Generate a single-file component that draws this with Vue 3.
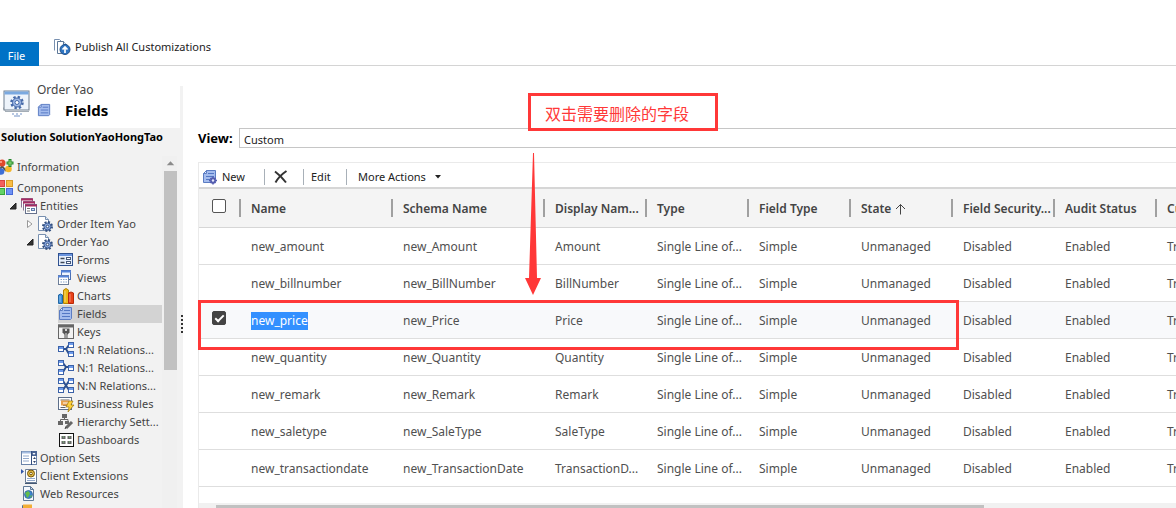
<script setup>
import { ref } from 'vue'

const page = '<path d="M2.500.5h7l3 3v11h-10z" fill="#f4f8fd" stroke="#5f7896"/><path d="M9.500.5v3h3z" fill="#c9d9ec" stroke="#5f7896"/>'
const box = (x, y) =>
  `<rect x="${x}" y="${y}" width="5" height="5" fill="#fff" stroke="#3a61a8"/><path d="M${x + .5} ${y + 1.5}h4" stroke="#6f9cec" stroke-width="2"/>`
const gear = (x, y) =>
  `<circle cx="${x}" cy="${y}" r="4.500" fill="none" stroke="#33507f" stroke-width="2" stroke-dasharray="2 1.530"/><circle cx="${x}" cy="${y}" r="3.500" fill="#8aa8dc" stroke="#3b5a94"/><circle cx="${x}" cy="${y}" r="1.300" fill="#fff" stroke="#33507f"/>`
const fieldSheet =
  '<path d="M4.500 1.500h9v11l-1 1h-11v-9z" fill="#a4bced" stroke="#5b7cc2"/><path d="M1.500 4.500l3-3v3z" fill="#e8f0ff" stroke="#5b7cc2"/><path d="M6 4.500h6M4 7.500h8M4 10.500h8" stroke="#5478c4"/>'

const icons = {
  info: '<path d="M4 7l4 5M4 7l-3 5M8 10l4-3" stroke="#555" stroke-width="2"/><circle cx="4" cy="4" r="3.500" fill="#e0482c"/><circle cx="3" cy="3" r="1" fill="#ffb39e"/><circle cx="3" cy="12.500" r="3.300" fill="#3d6fd6"/><circle cx="10.500" cy="10" r="3.300" fill="#f4b62a"/><path d="M12 0v8M8.500 4h7" stroke="#23852b" stroke-width="3"/><path d="M12 1v6M9.500 4h5" stroke="#8ede78"/>',
  components: '<rect x=".5" y=".5" width="6" height="6" fill="#f4605c" stroke="#d84341"/><rect x="8.500" y=".5" width="6" height="6" fill="#f9bc45" stroke="#d99b25"/><rect x=".5" y="8.500" width="6" height="6" fill="#63d267" stroke="#35a53a"/><rect x="8.500" y="8.500" width="6" height="6" fill="#6e92f5" stroke="#4769d8"/>',
  entities: '<path d="M.5 9.500v-9h11v4M2.500 12.500v-9h11v3" fill="#fff" stroke="#8b7393"/><path d="M0 1.500h12M2 4.500h12" stroke="#a72a62" stroke-width="2"/><rect x="4.500" y="6.500" width="11" height="9" fill="#fff" stroke="#66718c"/><path d="M4 7.500h12" stroke="#a72a62" stroke-width="2"/><path d="M6 10.500h3M6 13h3" stroke="#777"/><rect x="10.500" y="10.500" width="3" height="2" fill="#d7e3f4" stroke="#5d7ba9"/>',
  entity: '<path d="M.5.500h7l3 3v11H.5z" fill="#fff" stroke="#7890b0"/><path d="M7.500.5v3h3" fill="#dce7f4" stroke="#7890b0"/>' + gear(9.5, 10.5),
  forms: '<rect x=".5" y="1.500" width="14" height="12" fill="#e6effc" stroke="#2f5190"/><path d="M1 3h13" stroke="#6a94de" stroke-width="2"/><path d="M2.500 6.500h4M2.500 10.500h4" stroke="#3d4654" stroke-width="1.500"/><rect x="8.500" y="5.500" width="4" height="2" fill="#fff" stroke="#46597a"/><rect x="8.500" y="9.500" width="4" height="2" fill="#fff" stroke="#46597a"/>',
  views: '<rect x="3.500" y=".5" width="9" height="9" fill="#eef5ff" stroke="#4a70b5"/><path d="M3 1.500h10" stroke="#5585dc" stroke-width="2"/><rect x=".5" y="5.500" width="10" height="9" fill="#fff" stroke="#6c7d98"/><path d="M0 6.500h11" stroke="#5585dc" stroke-width="2"/><path d="M2.500 9.500h7M2.500 12h7" stroke="#87a4cb" stroke-dasharray="1.500 1"/>',
  charts: '<path d="M.5 7l2-1 2 1v8.500h-4z" fill="#3f91da" stroke="#2368a5"/><path d="M5.500 2l2.500-1.500L10.500 2v13.500h-5z" fill="#efb915" stroke="#b38305"/><path d="M10.500 5l2.500-1 2.500 1v10.500h-5z" fill="#e84118" stroke="#b82908"/><path d="M2 8v6M7 3v11M12 6v8" stroke="#fff" stroke-opacity=".4"/>',
  fields: fieldSheet,
  keys: '<path d="M0 2h16" stroke="#666" stroke-width="3"/><rect x=".5" y="1" width="15" height="13.500" fill="none" stroke="#666"/><path d="M8 6v8" stroke="#555" stroke-width="3"/><path d="M4.500 4.500h7v4l-2 2h-3l-2-2z" fill="#555"/><circle cx="8" cy="6" r="1" fill="#fff"/><path d="M8 9v5" stroke="#ddd"/>',
  oneN: '<path d="M5 7h3l3-4M8 7l3 5" stroke="#2c508f" stroke-width="2" fill="none"/>' + box(.5, 4.5) + box(10.5, .5) + box(10.5, 9.5),
  nOne: '<path d="M5 3l3 4h3M5 12l3-5" stroke="#2c508f" stroke-width="2" fill="none"/>' + box(.5, .5) + box(.5, 9.5) + box(10.5, 5.5),
  nN: '<path d="M5 3l6 9M11 3l-6 9" stroke="#2c508f" stroke-width="2" fill="none"/>' + box(.5, .5) + box(.5, 9.5) + box(10.5, .5) + box(10.5, 9.5),
  rules: '<rect x=".5" y="1.500" width="13" height="12" fill="#fff" stroke="#5d6f8a"/><path d="M2.500 4h9M5 9.500h6M2.500 11.500h5" stroke="#666"/><path d="M11 5.500H4v3h6" fill="none" stroke="#e8a04b" stroke-width="2"/><path d="M11 5h4l-2 4h3l-6 7 1-5H8z" fill="#ffd33c" stroke="#9b720c" stroke-width=".7"/>',
  hierarchy: '<path d="M4 0h5v4H4zM0 7h5v4H0zM7 7h4v3H7z" fill="#666"/><path d="M6.500 4v2M2.500 7V5.500H10V8" fill="none" stroke="#666"/><path d="M8 14l6-6" stroke="#666" stroke-width="3"/><path d="M7 15l1-2" stroke="#333"/>',
  dashboards: '<rect x="1.500" y="1.500" width="14" height="13" fill="#fff" stroke="#111"/><path d="M3.500 5.500h4M9.500 5.500h4M3.500 10.500h4M9.500 10.500h4" stroke="#666" stroke-width="3"/><path d="M5 4l1 2M11 4l1 2M5 9l1 2M11 9l1 2" stroke="#79a979"/>',
  optionSets: '<rect x=".5" y="1.500" width="15" height="13" fill="#fff" stroke="#6a83a8"/><path d="M1 2.500h9" stroke="#a5bde0" stroke-width="2"/><path d="M2 6h6M2 8.500h6M2 11h6" stroke="#93a9cb"/><path d="M10.500 1v14" stroke="#344e7f"/><path d="M11 1h5v5h-5z" fill="#4a6494"/><path d="M11.500 3h3l-1.500 2z" fill="#fff"/><path d="M12 9h3l-1.500-2zM12 11h3l-1.500 2z" fill="#2f436b"/>',
  client: '<path d="M0 1l3 2.500L0 6z" fill="#3156a8"/><path d="M4.500 1.500h11v13h-11z" fill="#fff" stroke="#6b7d96"/><path d="M4 15.500h12" stroke="#425773"/><circle cx="10" cy="5.500" r="3.500" fill="#e2bb45" stroke="#77570c"/><circle cx="10" cy="5.500" r="1.300" fill="#fff" stroke="#77570c"/><path d="M6 10.500h8M6 12.500h8" stroke="#93a9cb"/>',
  web: page + '<circle cx="7.500" cy="8.500" r="4" fill="#3b83cf" stroke="#2b5f91" stroke-width=".7"/><path d="M4 7l3-2 2 2-1 3-2 2-1-3zM9 10l2-1-1 3z" fill="#64bd4a"/>',
  process: '<path d="M1.500 14V1.500h9V14" fill="#fff" stroke="#526b92"/><path d="M2 2.500h9" stroke="#f2ae36" stroke-width="4"/>',
  newField: fieldSheet + '<circle cx="11" cy="11.500" r="3.200" fill="#6975c7"/><path d="M11 7.500v8M7 11.500h8M8.500 9l5 5M13.500 9l-5 5" stroke="#525bac" stroke-width="1.500"/><circle cx="11" cy="11.500" r="1.200" fill="#e8eaff"/>',
  publish: '<path d="M.5 11.500V.5h5l2 2" fill="#fff" stroke="#7890b0"/><path d="M3.500 2.500h6l3 3v9h-9z" fill="#fff" stroke="#5d7898"/><path d="M9.500 2.500v3h3" fill="#dce7f4" stroke="#5d7898"/><circle cx="11" cy="10.500" r="5" fill="#2f75c2" stroke="#1f4f8c"/><path d="M11 14V9M8.500 10.500L11 8l2.500 2.500" fill="none" stroke="#fff" stroke-width="1.700"/>'
}

const tree = [
  { level: 0, icon: 'info', label: 'Information', spaced: true },
  { level: 0, icon: 'components', label: 'Components' },
  { level: 1, icon: 'entities', label: 'Entities', arrow: 'open' },
  { level: 2, icon: 'entity', label: 'Order Item Yao', arrow: 'closed' },
  { level: 2, icon: 'entity', label: 'Order Yao', arrow: 'open' },
  { level: 3, icon: 'forms', label: 'Forms' },
  { level: 3, icon: 'views', label: 'Views' },
  { level: 3, icon: 'charts', label: 'Charts' },
  { level: 3, icon: 'fields', label: 'Fields', selected: true },
  { level: 3, icon: 'keys', label: 'Keys' },
  { level: 3, icon: 'oneN', label: '1:N Relations...' },
  { level: 3, icon: 'nOne', label: 'N:1 Relations...' },
  { level: 3, icon: 'nN', label: 'N:N Relations...' },
  { level: 3, icon: 'rules', label: 'Business Rules' },
  { level: 3, icon: 'hierarchy', label: 'Hierarchy Sett...' },
  { level: 3, icon: 'dashboards', label: 'Dashboards' },
  { level: 1, icon: 'optionSets', label: 'Option Sets' },
  { level: 1, icon: 'client', label: 'Client Extensions' },
  { level: 1, icon: 'web', label: 'Web Resources' },
  { level: 1, icon: 'process', label: 'Processes' }
]

const columns = ['Name', 'Schema Name', 'Display Nam...', 'Type', 'Field Type', 'State', 'Field Security...', 'Audit Status', 'Customizable']
const rows = ref([
  { name: 'new_amount', schema: 'new_Amount', display: 'Amount', checked: false },
  { name: 'new_billnumber', schema: 'new_BillNumber', display: 'BillNumber', checked: false },
  { name: 'new_price', schema: 'new_Price', display: 'Price', checked: true },
  { name: 'new_quantity', schema: 'new_Quantity', display: 'Quantity', checked: false },
  { name: 'new_remark', schema: 'new_Remark', display: 'Remark', checked: false },
  { name: 'new_saletype', schema: 'new_SaleType', display: 'SaleType', checked: false },
  { name: 'new_transactiondate', schema: 'new_TransactionDate', display: 'TransactionD...', checked: false }
])
</script>

<template>
  <div class="app">
    <header class="ribbon">
      <button class="file">File</button>
      <button class="publish">
        <svg class="icon" viewBox="0 0 16 16" v-html="icons.publish"></svg>
        Publish All Customizations
      </button>
    </header>

    <div class="body">
      <aside class="side">
        <div class="entity-head">
          <svg class="big" viewBox="0 0 28 28">
            <path d="M0 18l3 2" stroke="#bbb" stroke-width="2" />
            <rect x="1" y="1" width="25" height="19" fill="#eef4fb" stroke="#6f7f8f" />
            <path d="M1.500 3h24" stroke="#7aa9e0" stroke-width="3" />
            <path d="M2 21.500h24" stroke="#a4adb6" />
            <circle cx="14" cy="12.500" r="5.500" fill="none" stroke="#4569a8" stroke-width="2.500" stroke-dasharray="2.300 2.020" />
            <circle cx="14" cy="12.500" r="4.500" fill="#9db7e4" stroke="#4569a8" />
            <circle cx="14" cy="12.500" r="2" fill="#fff" stroke="#4569a8" />
            <path d="M9 24h2M13 24h2M17 24h2M11 26h6" stroke="#b8c8e2" stroke-width="2" />
          </svg>
          <div>
            <div class="crumb">Order Yao</div>
            <h1><svg class="icon" viewBox="0 0 16 16" v-html="icons.fields"></svg>Fields</h1>
          </div>
        </div>
        <div class="solution"><span>Solution SolutionYaoHongTao</span></div>
        <div class="tree-wrap">
          <nav class="tree">
            <a
              v-for="item in tree"
              :key="item.label"
              href="#"
              :class="['node', 'level' + item.level, { spaced: item.spaced, selected: item.selected }]"
            >
              <svg v-if="item.level === 1 || item.level === 2" class="arrow" viewBox="0 0 8 10">
                <path v-if="item.arrow === 'open'" d="M7 2v6H1z" fill="#333" stroke="#222" />
                <path v-if="item.arrow === 'closed'" d="M1.500 1.500v7L6 5z" fill="#fff" stroke="#999" />
              </svg>
              <span class="leaf">
                <svg class="icon" viewBox="0 0 16 16" v-html="icons[item.icon]"></svg>{{ item.label }}
              </span>
            </a>
          </nav>
          <div class="vscroll">
            <svg viewBox="0 0 14 13"><path d="M3 8.500l4-4.500 4 4.500z" fill="#8b8b8b" /></svg>
            <div class="vthumb"></div>
          </div>
        </div>
        <div class="grip"><i v-for="n in 5" :key="n"></i></div>
      </aside>

      <main class="main">
        <div class="view-row">
          <label for="view">View:</label>
          <select id="view"><option>Custom</option></select>
        </div>
        <section class="grid">
          <div class="toolbar">
            <button class="new"><svg class="icon" viewBox="0 0 16 16" v-html="icons.newField"></svg>New</button>
            <button class="delete" aria-label="Delete">
              <svg viewBox="0 0 14 14"><path d="M1 1.500c4 3 8 7 11 11M12.500 1C8 4 4 8 1.500 12.500" fill="none" stroke="#333" stroke-width="2" /></svg>
            </button>
            <button class="edit">Edit</button>
            <button class="more">More Actions <svg viewBox="0 0 6 4"><path d="M0 0h6L3 3.500z" fill="#222" /></svg></button>
          </div>
          <table>
            <colgroup>
              <col class="c-check" /><col class="c-wide" /><col class="c-wide" />
              <col v-for="n in 7" :key="n" class="c-std" />
            </colgroup>
            <thead>
              <tr>
                <th class="check"><input type="checkbox" aria-label="Select all" /></th>
                <th v-for="c in columns" :key="c">
                  <span>{{ c }}<svg v-if="c === 'State'" viewBox="0 0 11 12"><path d="M5.500 11.500V1.500M1 6l4.500-4.500L10 6" fill="none" stroke="#444" /></svg></span>
                </th>
              </tr>
            </thead>
            <tbody>
              <tr v-for="r in rows" :key="r.name" :class="{ picked: r.checked }">
                <td class="check"><input v-if="r.checked" v-model="r.checked" type="checkbox" :aria-label="r.name" /></td>
                <td><span :class="{ marked: r.checked }">{{ r.name }}</span></td>
                <td>{{ r.schema }}</td>
                <td>{{ r.display }}</td>
                <td>Single Line of...</td>
                <td>Simple</td>
                <td>Unmanaged</td>
                <td>Disabled</td>
                <td>Enabled</td>
                <td>True</td>
              </tr>
            </tbody>
          </table>
          <div class="hscroll"><div class="hthumb"></div></div>
        </section>
      </main>
    </div>

    <div class="note">双击需要删除的字段</div>
    <svg class="pointer" viewBox="0 0 16 142"><path d="M8 0h1l3 125h4L8 142 0 125h4z" fill="#ff3838" /></svg>
    <div class="frame"></div>
  </div>
</template>

<style>
body { background: #fff; }
</style>

<style scoped>
.app {
  position: relative;
  height: 100vh;
  overflow: hidden;
  display: flex;
  flex-direction: column;
  font: 11px/18px "Noto Sans", "Open Sans", sans-serif;
  color: #444;
}
* { box-sizing: border-box; }
button { border: 0; padding: 0; background: none; font: inherit; color: #222; display: flex; align-items: center; white-space: nowrap; }
svg { display: block; flex: none; }
.icon { width: 16px; height: 16px; overflow: visible; }

.ribbon { flex: none; height: 66px; display: flex; align-items: flex-end; border-bottom: 1px solid #d4d4d4; }
.file { width: 39px; height: 24px; justify-content: center; padding: 4px 6px 0 0; margin-bottom: -1px; background: #0072c6; color: #fff; }
.publish { margin: 0 0 9px 15px; gap: 5px; }

.body { flex: 1; min-height: 0; display: flex; }
.side { position: relative; flex: none; width: 183px; padding-top: 20px; overflow: hidden; display: flex; flex-direction: column; background: linear-gradient(#fff 0 20px, #f2f2f2 20px); }
.entity-head { flex: none; height: 42px; margin-right: 3px; background: #fff; display: flex; gap: 6px; padding: 0 0 0 3px; }
.big { width: 28px; height: 28px; margin-top: 4px; }
.crumb { line-height: 16px; margin-top: -4px; font-size: 12px; }
h1 { margin: 1px 0 0; display: flex; align-items: center; gap: 13px; font-size: 15px; line-height: 22px; color: #000; }
h1 .icon { width: 15px; height: 15px; }
.solution { flex: none; width: 163px; height: 18px; display: flex; justify-content: flex-end; font-weight: 700; color: #000; white-space: nowrap; }
.tree-wrap { flex: 1; min-height: 0; display: flex; margin-top: 10px; }
.tree { width: 162px; padding-top: 2px; overflow: hidden; }
.node { display: flex; align-items: center; height: 18px; color: #444; text-decoration: none; white-space: nowrap; }
.spaced { margin-bottom: 3px; }
.leaf { flex: 1; height: 18px; display: flex; align-items: center; gap: 3px; }
.arrow { width: 8px; height: 10px; margin-right: 4px; }
.level0 { margin-left: -2px; }
.level1 { padding-left: 9px; }
.level2 { padding-left: 26px; }
.level3 { padding-left: 58px; }
.selected .leaf { background: #d3d3d3; }
.vscroll { width: 15px; padding-left: 2px; background: #f0f0f0; }
.vscroll svg { width: 13px; height: 15px; }
.vthumb { height: 199px; background: #c1c1c1; }
.grip { position: absolute; right: 0; top: 249px; display: grid; gap: 2px; }
.grip i { width: 2px; height: 2px; background: #333; }

.main { flex: 1; min-width: 0; padding: 62px 0 0 15px; display: flex; flex-direction: column; }
.view-row { flex: none; display: flex; align-items: center; height: 20px; }
.view-row label { width: 41px; font-size: 13px; font-weight: 700; color: #000; }
select { flex: 1; height: 20px; appearance: none; border: 1px solid #c6c6c6; border-right: 0; border-radius: 0; background: #fff; padding: 2px 4px 0; font: inherit; color: #222; }
.grid { flex: 1; min-height: 0; margin-top: 14px; border: 1px solid #eaeaea; border-width: 1px 0 0 1px; display: flex; flex-direction: column; overflow: hidden; }
.toolbar { flex: none; height: 26px; display: flex; align-items: center; border-bottom: 2px solid #d6d6d6; padding: 3px 0 0 3px; }
.toolbar button { height: 16px; }
.toolbar button + button { border-left: 1px solid #a8b0b8; }
.new { width: 62px; gap: 4px; }
.delete { width: 39px; padding-left: 9px; }
.delete svg { width: 14px; height: 14px; }
.edit { width: 43px; padding-left: 7px; }
.more { padding-left: 11px; gap: 9px; }
.more svg { width: 6px; height: 4px; }

table { flex: none; width: 1058px; table-layout: fixed; border-collapse: separate; border-spacing: 0; font-size: 12px; }
.c-check { width: 40px; }
.c-wide { width: 152px; }
.c-std { width: 102px; }
th, td { padding: 2px 0 0 12px; text-align: left; white-space: nowrap; overflow: hidden; }
th { height: 39px; padding: 0; background: #f4f4f4; border-bottom: 1px solid #d6d6d6; font-weight: 600; }
th span { display: flex; align-items: center; gap: 4px; height: 18px; padding: 2px 0 0 10px; border-left: 2px solid #a0a0a0; }
th svg { width: 11px; height: 12px; }
td { height: 37px; border-bottom: 1px solid #dedede; color: #505050; }
.check { padding: 0 0 4px 13px; line-height: 0; }
.picked td { background: #f8f9fb; }
.marked { display: inline-block; background: #3390ff; color: #fff; }
input { appearance: none; width: 14px; height: 14px; margin: 0; border: 1px solid #555; border-radius: 2px; background: #fff; }
input:checked { border-color: #444; background: #444; display: inline-grid; place-items: center; }
input:checked::before { content: ""; width: 7px; height: 3px; border: solid #fff; border-width: 0 0 2px 2px; transform: translateY(-1px) rotate(-45deg); }
.hscroll { flex: none; height: 17px; margin-top: 16px; padding: 2px 0 0 17px; background: #f1f1f1; }
.hthumb { width: 80%; height: 13px; background: #c1c1c1; }

.note { position: absolute; left: 528px; top: 93px; width: 190px; height: 38px; border: 3px solid #ff3838; padding-left: 14px; font: 16px/34px "Noto Sans CJK SC", sans-serif; color: #ff3838; background: #fff; }
.pointer { position: absolute; left: 525px; top: 153px; width: 16px; height: 142px; }
.frame { position: absolute; left: 198px; top: 300px; width: 761px; height: 50px; border: 3px solid #ff3838; }
</style>
